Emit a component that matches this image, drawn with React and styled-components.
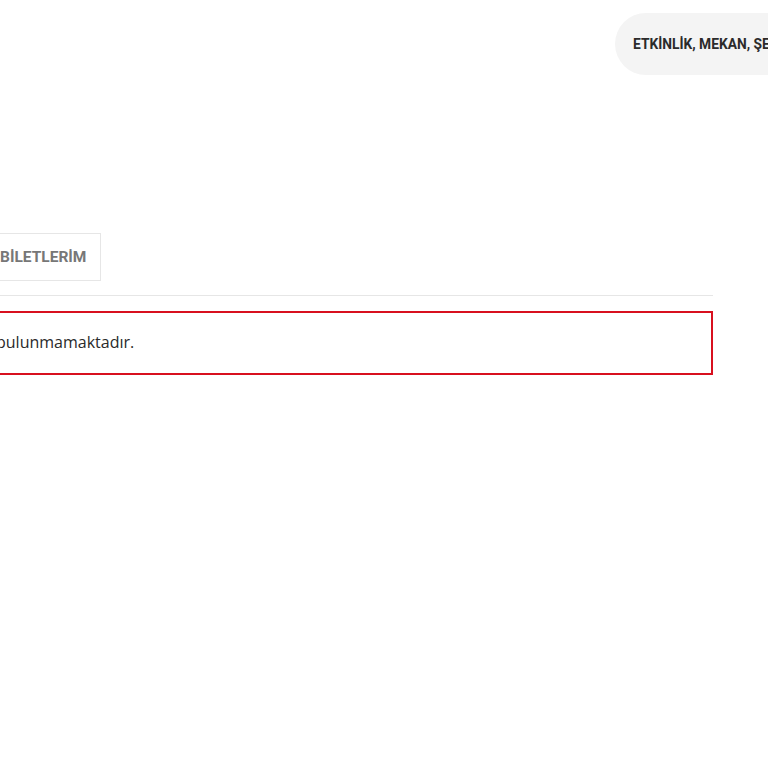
import styled, { createGlobalStyle } from "styled-components";

const Global = createGlobalStyle`
  html, body {
    margin: 0;
    padding: 0;
    background: #fff;
    overflow: hidden;
  }
  body {
    font-family: "Open Sans", "Liberation Sans", sans-serif;
  }
`;

const Page = styled.div`
  width: 768px;
  height: 768px;
  overflow: hidden;
`;

const Header = styled.header`
  display: flex;
  justify-content: flex-end;
  padding-top: 13px;
`;

const SearchPill = styled.div`
  flex: 0 0 auto;
  width: 300px;
  height: 62px;
  margin-right: -147px;
  box-sizing: border-box;
  padding-left: 18px;
  display: flex;
  align-items: center;
  background: #f4f4f4;
  border-radius: 31px;
  font-family: Roboto, "Liberation Sans", sans-serif;
  font-weight: 700;
  font-size: 13.8px;
  color: #2b2b2b;
  white-space: nowrap;
`;

const Main = styled.main`
  width: 728px;
  margin-left: -15px;
  margin-top: 158px;
`;

const Tabs = styled.div`
  display: flex;
  padding-bottom: 14px;
  border-bottom: 1px solid #e6e6e6;
`;

const Tab = styled.div`
  height: 48px;
  box-sizing: border-box;
  padding: 0 14px;
  display: flex;
  align-items: center;
  border: 1px solid #e6e6e6;
  font-family: Roboto, "Liberation Sans", sans-serif;
  font-weight: 700;
  font-size: 15.5px;
  color: #777;
`;

const Alert = styled.div`
  margin-top: 15px;
  height: 64px;
  box-sizing: border-box;
  display: flex;
  align-items: center;
  padding-left: 9px;
  padding-bottom: 3px;
  border: 2px solid #d8101f;
  font-size: 16px;
  color: #2a2a2a;
  white-space: nowrap;
`;

export default function App() {
  return (
    <Page>
      <Global />
      <Header>
        <SearchPill>ETKİNLİK, MEKAN, ŞEHİR ARA</SearchPill>
      </Header>
      <Main>
        <Tabs>
          <Tab>BİLETLERİM</Tab>
        </Tabs>
        <Alert>bulunmamaktadır.</Alert>
      </Main>
    </Page>
  );
}
